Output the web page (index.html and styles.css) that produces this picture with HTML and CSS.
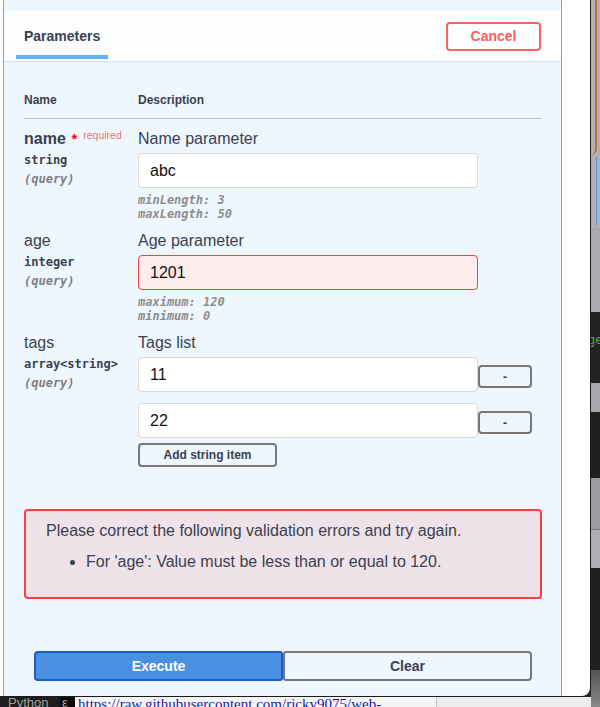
FILE: index.html
```html
<!DOCTYPE html>
<html lang="en">
<head>
<meta charset="utf-8">
<title>Parameters</title>
<link rel="stylesheet" href="styles.css">
</head>
<body>
<div class="window">
  <div class="panel">
    <div class="section-header">
      <div class="tab">Parameters</div>
      <button class="btn-cancel">Cancel</button>
    </div>
    <div class="table-container">
      <div class="row thead">
        <div>Name</div>
        <div>Description</div>
      </div>
      <div class="row param">
        <div class="col-name">
          <div class="pname req">name<span class="star">*</span><span class="required">required</span></div>
          <div class="ptype">string</div>
          <div class="pin">(query)</div>
        </div>
        <div class="col-desc">
          <p class="pdesc">Name parameter</p>
          <div class="input">abc</div>
          <div class="constraints">minLength: 3<br>maxLength: 50</div>
        </div>
      </div>
      <div class="row param">
        <div class="col-name">
          <div class="pname">age</div>
          <div class="ptype">integer</div>
          <div class="pin">(query)</div>
        </div>
        <div class="col-desc">
          <p class="pdesc">Age parameter</p>
          <div class="input invalid">1201</div>
          <div class="constraints">maximum: 120<br>minimum: 0</div>
        </div>
      </div>
      <div class="row param">
        <div class="col-name">
          <div class="pname">tags</div>
          <div class="ptype">array&lt;string&gt;</div>
          <div class="pin">(query)</div>
        </div>
        <div class="col-desc">
          <p class="pdesc">Tags list</p>
          <div class="array-item">
            <div class="input">11</div>
            <button class="btn-remove">-</button>
          </div>
          <div class="array-item">
            <div class="input">22</div>
            <button class="btn-remove">-</button>
          </div>
          <button class="btn-add">Add string item</button>
        </div>
      </div>
    </div>
    <div class="errors">
      <p>Please correct the following validation errors and try again.</p>
      <ul>
        <li>For 'age': Value must be less than or equal to 120.</li>
      </ul>
    </div>
    <div class="btn-group">
      <button class="btn-execute">Execute</button>
      <button class="btn-clear">Clear</button>
    </div>
  </div>
</div>
<div class="strip">
  <div class="s1"><div class="orange"></div></div>
  <div class="s2"><div class="blue"></div></div>
  <div class="s3"></div>
  <div class="s4">ge</div>
  <div class="s5"></div>
  <div class="s6"></div>
  <div class="s7"></div>
  <div class="s8"></div>
  <div class="s9"></div>
  <div class="s10"></div>
</div>
<div class="dock">
  <div class="dock-a">Python</div>
  <div class="dock-b">ε</div>
  <div class="dock-c"><span class="link">https://raw.githubusercontent.com/ricky9075/web-</span></div>
  <div class="dock-d"></div>
</div>
</body>
</html>
```
FILE: styles.css
```css
* { box-sizing: border-box; }
html, body { margin: 0; padding: 0; }
body {
  width: 600px;
  height: 707px;
  overflow: hidden;
  background: #262626;
  display: grid;
  grid-template-columns: 591px 9px;
  grid-template-rows: 697px 10px;
  font-family: "Liberation Sans", Arial, sans-serif;
  color: #3b4151;
}
.window {
  grid-column: 1;
  grid-row: 1;
  background: #fff;
  border-right: 1px solid #1c1c1c;
  border-bottom: 1px solid #1c1c1c;
  border-bottom-right-radius: 9px;
  padding-left: 3px;
  display: flex;
  overflow: hidden;
}
.panel {
  width: 559px;
  border-left: 1px solid #61affe;
  border-right: 1px solid #61affe;
  background: #eef6fe;
  padding-top: 11px;
  display: flex;
  flex-direction: column;
}
.section-header {
  height: 50px;
  flex: none;
  background: rgba(255, 255, 255, .8);
  box-shadow: 0 1px 2px rgba(0, 0, 0, .1);
  display: flex;
  align-items: center;
  justify-content: space-between;
  padding: 0 20px 0 12px;
}
.tab {
  align-self: flex-end;
  margin-bottom: 2px;
  padding: 0 8px 11px;
  border-bottom: 4px solid #61affe;
  font-size: 14px;
  font-weight: 700;
  line-height: 16px;
}
button {
  font-family: "Liberation Sans", Arial, sans-serif;
  font-weight: 700;
  cursor: pointer;
  padding: 0;
}
.btn-cancel {
  width: 95px;
  height: 29px;
  border: 2px solid #ff6060;
  border-radius: 4px;
  background: transparent;
  color: #ff6060;
  font-size: 14px;
}
.table-container {
  padding: 20px 20px 0;
}
.row {
  display: grid;
  grid-template-columns: 114px 1fr;
}
.thead {
  padding: 12px 0 11px;
  border-bottom: 1px solid rgba(59, 65, 81, .3);
  font-size: 12px;
  font-weight: 700;
  line-height: 14px;
}
.param { padding-top: 10px; }
.pname {
  height: 19px;
  font-size: 16px;
  line-height: 19px;
}
.pname.req { font-weight: 700; }
.star {
  color: #f00;
  font-size: 14px;
  line-height: 0;
  margin-left: 6px;
}
.required {
  color: rgba(255, 0, 0, .6);
  font-size: 10.5px;
  font-weight: 400;
  line-height: 0;
  margin-left: 6px;
  vertical-align: 5px;
}
.ptype {
  font-family: "DejaVu Sans Mono", monospace;
  font-size: 12px;
  font-weight: 700;
  line-height: 14px;
  padding: 5px 0;
}
.pin {
  font-family: "DejaVu Sans Mono", monospace;
  font-size: 12px;
  font-style: italic;
  font-weight: 700;
  line-height: 14px;
  color: #808080;
}
.pdesc {
  margin: 0;
  font-size: 16px;
  line-height: 19px;
}
.input {
  width: 340px;
  height: 35px;
  margin: 5px 0;
  padding: 0 11px;
  border: 1px solid #d9d9d9;
  border-radius: 4px;
  background: #fff;
  font-size: 16px;
  line-height: 33px;
  color: #111;
}
.input.invalid {
  background: #feebeb;
  border-color: #f93e3e;
}
.constraints {
  font-family: "DejaVu Sans Mono", monospace;
  font-size: 12px;
  font-style: italic;
  font-weight: 700;
  line-height: 14px;
  color: #8e8e8e;
}
.array-item {
  display: flex;
  align-items: flex-start;
}
.array-item + .array-item { margin-top: 1px; }
.btn-remove {
  width: 54px;
  height: 23px;
  margin-top: 13px;
  border: 2px solid #777;
  border-radius: 4px;
  background: transparent;
  color: #3b4151;
  font-size: 12px;
}
.btn-add {
  display: block;
  width: 139px;
  height: 24px;
  border: 2px solid #777;
  border-radius: 4px;
  background: transparent;
  color: #3b4151;
  font-size: 12px;
}
.errors {
  margin: 42px 19px 0 20px;
  height: 90px;
  border: 2px solid #f93e3e;
  border-radius: 4px;
  background: #efe2e8;
  padding: 10px 20px;
  font-size: 16px;
  line-height: 19px;
}
.errors p { margin: 0; }
.errors ul {
  margin: 12px 0 16px;
  padding-left: 40px;
}
.btn-group {
  display: flex;
  margin: 52px 29px 0 30px;
}
.btn-execute {
  flex: 1;
  height: 30px;
  background: #4990e2;
  border: 2px solid #1a5cc4;
  border-radius: 4px 3px 3px 4px;
  color: #fff;
  font-size: 14px;
}
.btn-clear {
  flex: 1;
  height: 30px;
  background: transparent;
  border: 2px solid #777;
  border-radius: 3px 4px 4px 3px;
  color: #3b4151;
  font-size: 14px;
}
.strip {
  grid-column: 2;
  grid-row: 1 / 3;
  display: flex;
  flex-direction: column;
  background: #222;
  overflow: hidden;
}
.s1 { height: 157px; background: #b3b3b7; }
.orange {
  width: 6px;
  height: 155px;
  border-right: 2px solid #c27425;
  border-bottom-right-radius: 8px;
}
.s2 { height: 71px; background: #b1b1b5; }
.blue {
  width: 6px;
  height: 68px;
  border-right: 1px solid #5b8fdc;
}
.s3 { height: 84px; background: #aaaaae; }
.s4 {
  height: 71px;
  background: #222;
  color: #4caf50;
  font-family: "DejaVu Sans Mono", monospace;
  font-size: 12px;
  line-height: 56px;
  margin-left: -3px;
  white-space: nowrap;
}
.s5 { height: 29px; background: #a8a8ac; }
.s6 { height: 66px; background: #202020; }
.s7 { height: 52px; background: #9b9ba0; border-bottom: 1px solid #7a7a7e; }
.s8 { height: 38px; background: #b0b0b4; }
.s9 { height: 102px; background: #1f1f1f; }
.s10 { flex: 1; background: linear-gradient(#555, #888); }
.dock {
  grid-column: 1;
  grid-row: 2;
  display: flex;
  overflow: hidden;
}
.dock-a {
  width: 60px;
  background: #1e1e1e;
  color: #a0a0a0;
  font-size: 13px;
  line-height: 12px;
  padding-left: 8px;
}
.dock-b {
  width: 15px;
  background: #0a0a0a;
  color: #aaa;
  font-size: 13px;
  line-height: 12px;
  padding-left: 2px;
}
.dock-c {
  width: 361px;
  background: #f4f4f4;
  padding-left: 3px;
  font-family: "Liberation Serif", "Times New Roman", serif;
  font-size: 15px;
  line-height: 15px;
  white-space: nowrap;
  overflow: hidden;
}
.link { color: #1b1ba8; }
.dock-d {
  flex: 1;
  background: #ececec;
  border-left: 1px solid #c4c4c4;
}
```
